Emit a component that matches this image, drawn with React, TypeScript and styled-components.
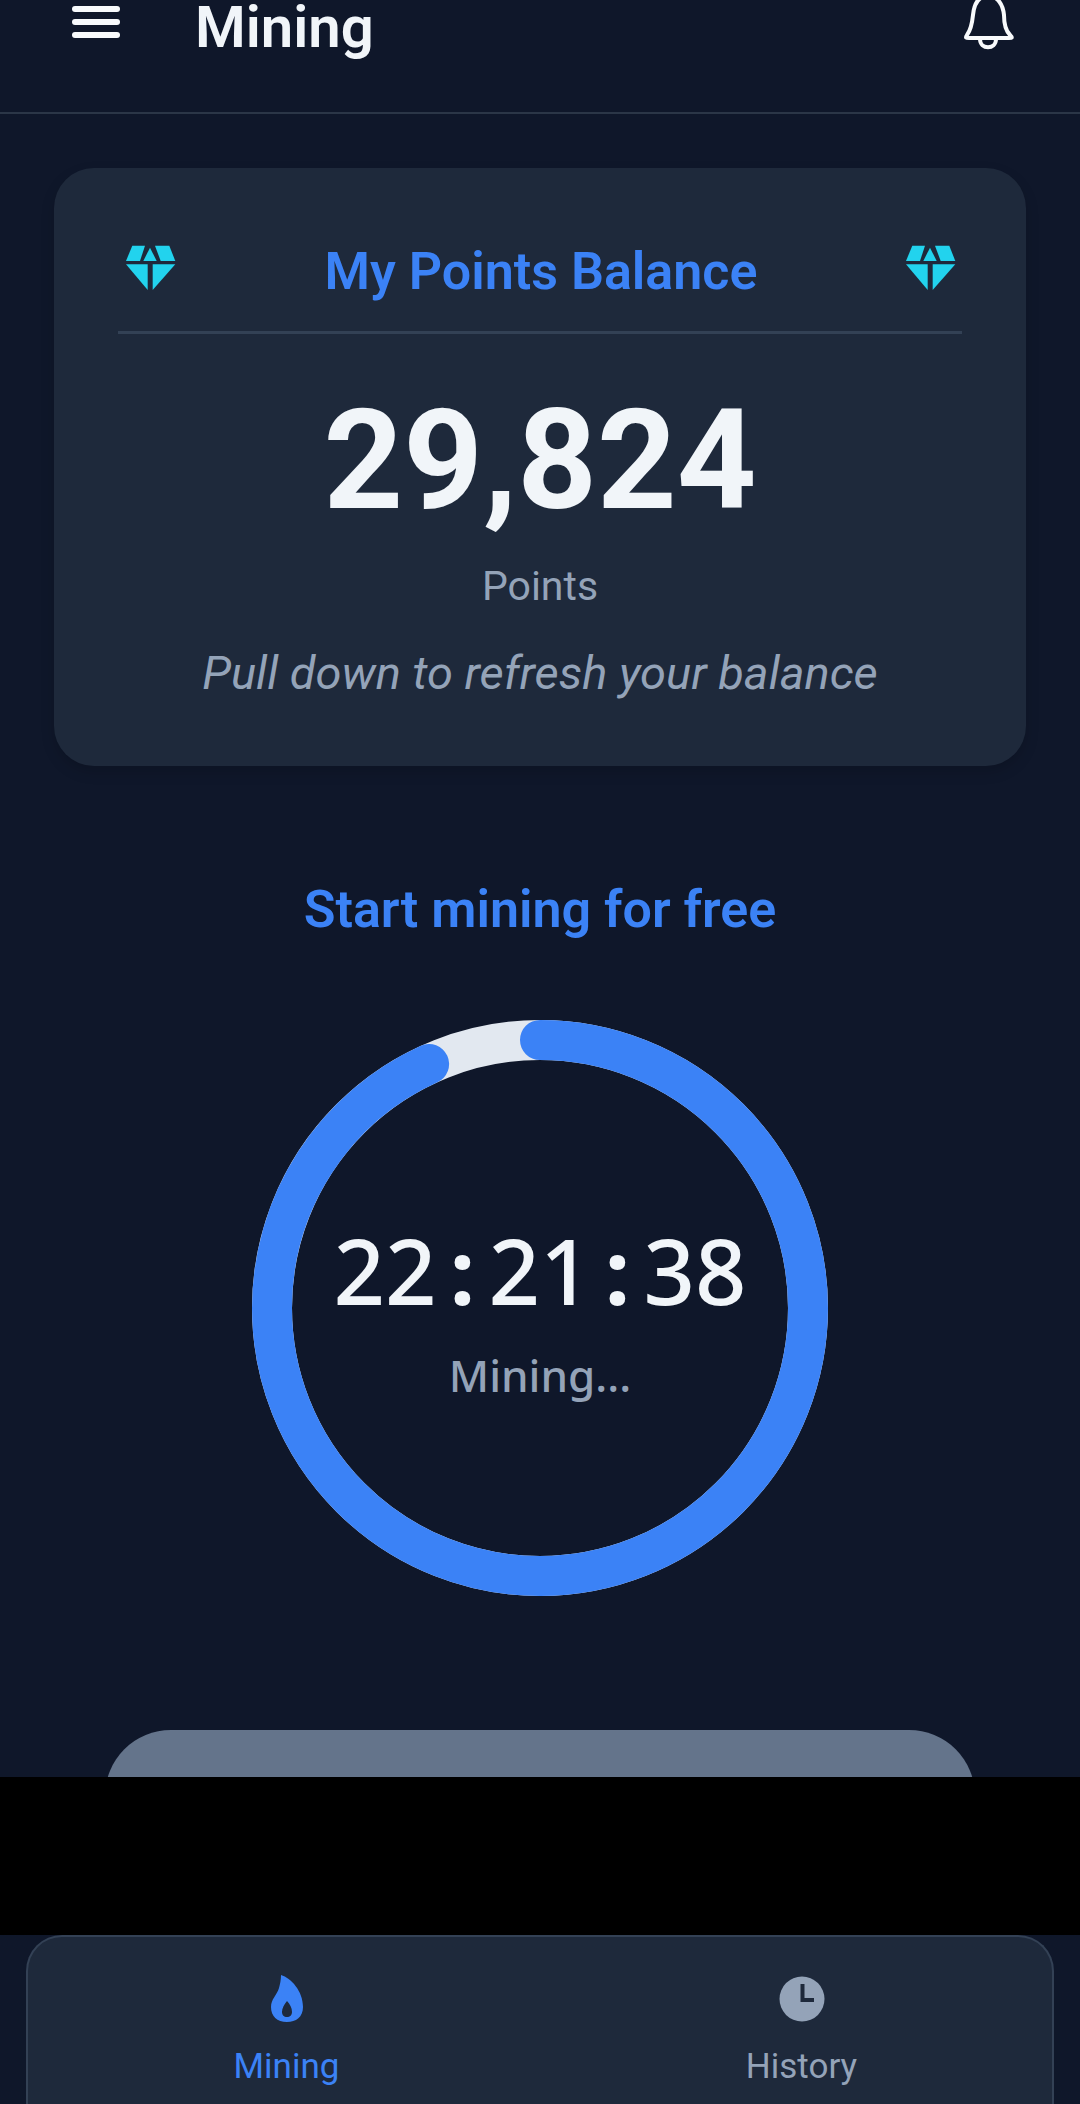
import styled, { createGlobalStyle } from "styled-components";

const DAY_SECONDS = 86400;
const ELAPSED_SECONDS = 22 * 3600 + 21 * 60 + 38;
const RING_RADIUS = 268;
const RING_LENGTH = 2 * Math.PI * RING_RADIUS;

const GlobalStyle = createGlobalStyle`
  html, body {
    margin: 0;
    background: #0f172a;
    overflow: hidden;
  }
  * {
    box-sizing: border-box;
  }
`;

const Page = styled.div`
  width: 1080px;
  height: 2104px;
  display: flex;
  flex-direction: column;
  background: #0f172a;
  font-family: Roboto, "Liberation Sans", sans-serif;
  overflow: hidden;
`;

const Header = styled.header`
  flex: 0 0 114px;
  display: flex;
  align-items: flex-start;
  padding: 0 66px 0 72px;
  border-bottom: 2px solid #2b3647;
`;

const MenuIcon = styled.svg`
  width: 48px;
  height: 32px;
  margin-top: 6px;
  flex: none;
`;

const PageTitle = styled.h1`
  margin: 0 0 0 75px;
  flex: 1;
  font-size: 58px;
  line-height: 54px;
  font-weight: 600;
  color: #f1f5f9;
`;

const BellIcon = styled.svg`
  width: 50px;
  height: 50px;
  flex: none;
`;

const Main = styled.main`
  flex: 1;
  min-height: 0;
  overflow: hidden;
  display: flex;
  flex-direction: column;
  align-items: center;
  padding: 54px 54px 0;
`;

const BalanceCard = styled.section`
  flex: none;
  width: 100%;
  height: 598px;
  padding: 0 64px;
  display: flex;
  flex-direction: column;
  align-items: center;
  background: #1e293b;
  border-radius: 40px;
  box-shadow: 0 6px 14px rgba(0, 0, 0, 0.15);
`;

const CardHead = styled.div`
  flex: none;
  width: 100%;
  height: 166px;
  padding: 44px 6px 0 8px;
  display: flex;
  align-items: center;
  justify-content: space-between;
  border-bottom: 3px solid #334155;
`;

const Gem = styled.svg`
  width: 50px;
  height: 46px;
  margin-bottom: 8px;
  flex: none;
`;

const CardTitle = styled.h2`
  margin: 0;
  font-size: 52px;
  line-height: 60px;
  font-weight: 600;
  color: #3b82f6;
`;

const Amount = styled.div`
  margin-top: 52px;
  font-size: 139px;
  line-height: 150px;
  font-weight: 700;
  color: #f1f5f9;
`;

const Unit = styled.div`
  margin-top: 26px;
  font-size: 41px;
  line-height: 48px;
  color: #94a3b8;
`;

const Hint = styled.p`
  margin: 37px 0 0;
  font-size: 47px;
  line-height: 52px;
  font-style: italic;
  color: #94a3b8;
`;

const SectionTitle = styled.h2`
  flex: none;
  margin: 114px 0 0;
  font-size: 52px;
  line-height: 60px;
  font-weight: 600;
  color: #3b82f6;
`;

const RingWrap = styled.div`
  margin-top: 80px;
  width: 576px;
  height: 576px;
  display: grid;
  flex: none;
  > * {
    grid-area: 1 / 1;
  }
`;

const RingSvg = styled.svg`
  width: 576px;
  height: 576px;
`;

const RingInner = styled.div`
  display: flex;
  flex-direction: column;
  align-items: center;
  padding-top: 200px;
`;

const Timer = styled.div`
  display: flex;
  font-family: "Noto Sans", sans-serif;
  font-size: 90px;
  line-height: 100px;
  font-weight: 500;
  color: #f1f5f9;
`;

const TimerSep = styled.span`
  width: 52px;
  text-align: center;
  font-weight: 700;
`;

const RingLabel = styled.div`
  margin-top: 29px;
  font-family: "Noto Sans", sans-serif;
  font-size: 44px;
  line-height: 52px;
  font-weight: 500;
  color: #94a3b8;
`;

const ActionButton = styled.div`
  flex: none;
  margin-top: 134px;
  width: 870px;
  height: 144px;
  border-radius: 66px;
  background: #64748b;
`;

const Band = styled.div`
  flex: 0 0 158px;
  background: #000;
`;

const BottomNav = styled.nav`
  flex: 0 0 169px;
  margin: 0 26px;
  padding: 38px 0 0 1px;
  display: grid;
  grid-template-columns: 515px 515px;
  background: #1e293b;
  border: 2px solid #334155;
  border-bottom: 0;
  border-radius: 36px 36px 0 0;
  overflow: hidden;
`;

const NavItem = styled.div<{ $active?: boolean }>`
  display: flex;
  flex-direction: column;
  align-items: center;
  font-size: 35px;
  line-height: 40px;
  color: ${(p) => (p.$active ? "#3b82f6" : "#94a3b8")};
`;

const NavIcon = styled.svg`
  width: 46px;
  height: 48px;
  margin-bottom: 24px;
`;

function Diamond() {
  return (
    <Gem viewBox="0 0 50 46" fill="#22d3ee">
      <path d="M6.3 .7H19L14 16H0z" />
      <path d="M24 2.7 30.7 16H17.3z" />
      <path d="M29 .7h14.3L49.3 16H34.7z" />
      <path d="M0 19.3h21.7V45z" />
      <path d="M26.7 19.3h22.6L26.7 45z" />
    </Gem>
  );
}

export default function App() {
  const progress = ELAPSED_SECONDS / DAY_SECONDS;

  return (
    <Page>
      <GlobalStyle />
      <Header>
        <MenuIcon viewBox="0 0 48 32" fill="#f8fafc">
          <rect x="0" y="0" width="48" height="6" rx="3" />
          <rect x="0" y="13" width="48" height="6" rx="3" />
          <rect x="0" y="26" width="48" height="6" rx="3" />
        </MenuIcon>
        <PageTitle>Mining</PageTitle>
        <BellIcon viewBox="0 8 50 50" fill="none" stroke="#f8fafc" strokeWidth="4" strokeLinejoin="round" strokeLinecap="round">
          <path d="M24 4C14 4 10 13 9 23 8 33 6 39 3 43 1 46 2 46 5 46H45C48 46 49 46 46 43 42 39 40 33 40 23 39 13 34 4 24 4Z" />
          <path d="M16 47C16 58 32 58 32 47" />
        </BellIcon>
      </Header>

      <Main>
        <BalanceCard>
          <CardHead>
            <Diamond />
            <CardTitle>My Points Balance</CardTitle>
            <Diamond />
          </CardHead>
          <Amount>29,824</Amount>
          <Unit>Points</Unit>
          <Hint>Pull down to refresh your balance</Hint>
        </BalanceCard>

        <SectionTitle>Start mining for free</SectionTitle>

        <RingWrap>
          <RingSvg viewBox="0 0 576 576">
            <circle cx="288" cy="288" r={RING_RADIUS} fill="none" stroke="#e2e8f0" strokeWidth="40" />
            <circle
              cx="288"
              cy="288"
              r={RING_RADIUS}
              fill="none"
              stroke="#3b82f6"
              strokeWidth="40"
              strokeLinecap="round"
              strokeDasharray={`${RING_LENGTH * progress} ${RING_LENGTH}`}
              transform="rotate(-90 288 288)"
            />
          </RingSvg>
          <RingInner>
            <Timer>
              <span>22</span>
              <TimerSep>:</TimerSep>
              <span>21</span>
              <TimerSep>:</TimerSep>
              <span>38</span>
            </Timer>
            <RingLabel>Mining...</RingLabel>
          </RingInner>
        </RingWrap>

        <ActionButton />
      </Main>

      <Band />

      <BottomNav>
        <NavItem $active>
          <NavIcon viewBox="0 0 46 48">
            <path
              fill="#3b82f6"
              fillRule="evenodd"
              d="M17 0C27 3 39 16 39 32 39 42 32 47 23 47 13 47 7 41 7 32 7 24 13 20 15 13 16 9 17 5 17 0ZM23 26C20 30 18 33 18 37 18 40 20 42 23 42 26 42 28 40 28 37 28 33 26 29 23 26Z"
            />
          </NavIcon>
          Mining
        </NavItem>
        <NavItem>
          <NavIcon viewBox="0 0 46 48">
            <circle cx="23" cy="24" r="22.5" fill="#94a3b8" />
            <path d="M23.5 9V25H35" fill="none" stroke="#1e293b" strokeWidth="4" />
          </NavIcon>
          History
        </NavItem>
      </BottomNav>
    </Page>
  );
}
